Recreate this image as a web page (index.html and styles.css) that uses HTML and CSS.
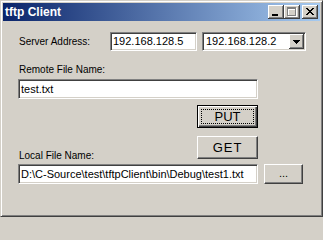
FILE: index.html
```html
<!DOCTYPE html>
<html>
<head>
<meta charset="utf-8">
<link rel="stylesheet" href="styles.css">
</head>
<body>
<div class="window">
  <div class="titlebar">
    <span class="title">tftp Client</span>
    <div class="caps">
      <div class="capbtn">
        <svg width="16" height="14" shape-rendering="crispEdges"><rect x="4" y="9" width="6" height="2" fill="#000"/></svg>
      </div>
      <div class="capbtn">
        <svg width="16" height="14" shape-rendering="crispEdges">
          <g fill="#fff" transform="translate(1,1)">
            <rect x="3" y="2" width="9" height="2"/><rect x="3" y="2" width="1" height="9"/><rect x="11" y="2" width="1" height="9"/><rect x="3" y="10" width="9" height="1"/>
          </g>
          <g fill="#808080">
            <rect x="3" y="2" width="9" height="2"/><rect x="3" y="2" width="1" height="9"/><rect x="11" y="2" width="1" height="9"/><rect x="3" y="10" width="9" height="1"/>
          </g>
        </svg>
      </div>
      <div class="capbtn close">
        <svg width="16" height="14" shape-rendering="crispEdges">
          <g fill="#000" transform="translate(4,3)">
            <rect x="0" y="0" width="2" height="1"/><rect x="6" y="0" width="2" height="1"/>
            <rect x="1" y="1" width="2" height="1"/><rect x="5" y="1" width="2" height="1"/>
            <rect x="2" y="2" width="4" height="1"/>
            <rect x="3" y="3" width="2" height="1"/>
            <rect x="2" y="4" width="4" height="1"/>
            <rect x="1" y="5" width="2" height="1"/><rect x="5" y="5" width="2" height="1"/>
            <rect x="0" y="6" width="2" height="1"/><rect x="6" y="6" width="2" height="1"/>
          </g>
        </svg>
      </div>
    </div>
  </div>
  <div class="client">
    <div class="row-server">
      <span class="lbl lbl-server">Server Address:</span>
      <div class="textbox tb-server">192.168.128.5</div>
      <div class="combo">
        <span class="combo-text">192.168.128.2</span>
        <div class="combo-btn">
          <svg width="7" height="4" shape-rendering="crispEdges">
            <rect x="0" y="0" width="7" height="1"/><rect x="1" y="1" width="5" height="1"/><rect x="2" y="2" width="3" height="1"/><rect x="3" y="3" width="1" height="1"/>
          </svg>
        </div>
      </div>
    </div>
    <div class="lbl lbl-remote">Remote File Name:</div>
    <div class="textbox tb-wide">test.txt</div>
    <div class="btn btn-default btn-put"><span class="focus">PUT</span></div>
    <div class="row-get">
      <span class="lbl lbl-local">Local File Name:</span>
      <div class="btn btn-get">GET</div>
    </div>
    <div class="row-local">
      <div class="textbox tb-wide">D:\C-Source\test\tftpClient\bin\Debug\test1.txt</div>
      <div class="btn btn-browse">...</div>
    </div>
  </div>
</div>
</body>
</html>
```
FILE: styles.css
```css
html, body {
  margin: 0;
  padding: 0;
  background: #d4d0c8;
}
.window {
  width: 323px;
  height: 217px;
  box-sizing: border-box;
  border: 1px solid;
  border-color: #d4d0c8 #404040 #404040 #d4d0c8;
  box-shadow: inset 1px 1px #fff, inset -1px -1px #808080;
  padding: 2px;
  background: #d4d0c8;
  font-family: "Liberation Sans", Arial, sans-serif;
  color: #000;
}
.titlebar {
  height: 18px;
  background: linear-gradient(to right, #0a246a, #a6caf0);
  display: flex;
  align-items: flex-start;
  justify-content: space-between;
}
.title {
  color: #fff;
  font-weight: bold;
  font-size: 12px;
  line-height: 18px;
  padding-left: 2px;
}
.caps {
  display: flex;
  margin-top: 2px;
  margin-right: 2px;
}
.capbtn {
  width: 16px;
  height: 14px;
  background: #d4d0c8;
  box-shadow: inset -1px -1px #404040, inset 1px 1px #fff, inset -2px -2px #808080;
}
.capbtn svg { display: block; }
.capbtn.close { margin-left: 2px; }

.client {
  padding: 11px 0 0 15px;
}
.lbl {
  font-size: 10px;
  line-height: 13px;
  white-space: nowrap;
}
.row-server {
  display: flex;
  align-items: center;
  height: 19px;
}
.lbl-server {
  width: 92px;
  box-sizing: border-box;
  padding-left: 1px;
}
.textbox {
  box-sizing: border-box;
  background: #fff;
  border: 1px solid;
  border-color: #808080 #fff #fff #808080;
  box-shadow: inset 1px 1px #404040, inset -1px -1px #d4d0c8;
  font-size: 11px;
  padding: 0 0 0 2px;
  white-space: nowrap;
  overflow: hidden;
}
.tb-server {
  width: 87px;
  height: 19px;
  line-height: 17px;
}
.combo {
  margin-left: 5px;
  width: 104px;
  height: 19px;
  box-sizing: border-box;
  background: #fff;
  border: 1px solid;
  border-color: #808080 #fff #fff #808080;
  box-shadow: inset 1px 1px #404040, inset -1px -1px #d4d0c8;
  display: flex;
  padding: 1px;
  font-size: 11px;
}
.combo-text {
  flex: 1;
  line-height: 15px;
  padding-left: 2px;
}
.combo-btn {
  width: 15px;
  height: 15px;
  box-sizing: border-box;
  background: #d4d0c8;
  box-shadow: inset -1px -1px #404040, inset 1px 1px #fff, inset -2px -2px #808080;
  display: flex;
  align-items: center;
  justify-content: center;
}
.combo-btn svg { display: block; margin-top: 1px; }
.lbl-remote {
  margin-top: 12px;
  padding-left: 1px;
}
.tb-wide {
  width: 240px;
  height: 20px;
  line-height: 18px;
  margin-top: 3px;
}
.btn {
  box-sizing: border-box;
  background: #d4d0c8;
  border: 1px solid;
  border-color: #fff #404040 #404040 #fff;
  box-shadow: inset -1px -1px #808080;
  font-size: 13px;
  display: flex;
  align-items: center;
  justify-content: center;
}
.btn-put {
  width: 61px;
  height: 23px;
  margin: 6px 0 0 179px;
  border-color: #000;
  box-shadow: inset 1px 1px #fff, inset -1px -1px #404040, inset -2px -2px #808080;
  padding: 3px;
}
.focus {
  flex: 1;
  align-self: stretch;
  border: 1px dotted #000;
  display: flex;
  align-items: center;
  justify-content: center;
  line-height: 13px;
}
.row-get {
  display: flex;
  justify-content: space-between;
  width: 240px;
  margin-top: 8px;
}
.lbl-local {
  align-self: flex-end;
  margin-bottom: -3px;
  padding-left: 1px;
}
.btn-get {
  width: 61px;
  height: 23px;
  letter-spacing: 1px;
}
.row-local {
  display: flex;
  margin-top: 5px;
}
.row-local .tb-wide { margin-top: 0; }
.btn-browse {
  width: 39px;
  height: 20px;
  margin-left: 6px;
  font-size: 11px;
  align-items: flex-end;
  padding-bottom: 4px;
}
```
